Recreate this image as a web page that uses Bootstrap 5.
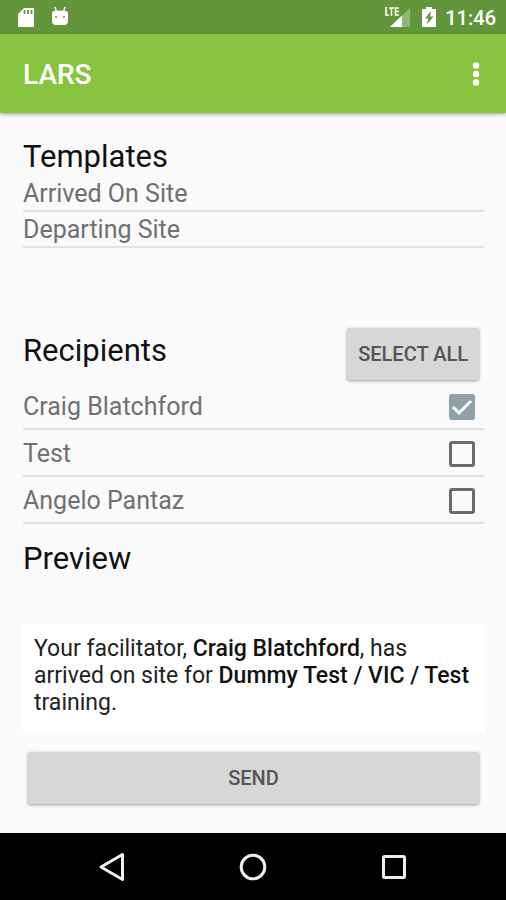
<!DOCTYPE html>
<html lang="en">
<head>
<meta charset="utf-8">
<meta name="viewport" content="width=device-width, initial-scale=1">
<title>LARS</title>
<link href="https://cdn.jsdelivr.net/npm/bootstrap@5.3.0/dist/css/bootstrap.min.css" rel="stylesheet">
<style>
body { font-family: Roboto, "Noto Sans", sans-serif; background: #fafafa; color: #111; }
svg { display: block; }
.status-bar { background: #63963a; height: 34px; padding: 2px 10px 0 17px; color: #fff; }
.clock { font-size: 20px; line-height: 24px; font-weight: 500; }
.app-bar { background: #88c440; height: 79px; padding: 2px 12px 0 23px; box-shadow: 0 1px 4px rgba(0,0,0,.4); }
.app-title { font-size: 28px; line-height: 32px; font-weight: 500; color: #fff; }
.app-menu { width: 36px; height: 44px; }
.content { padding: 25px 22px 28px 23px; }
.section-title { font-size: 31px; line-height: 38px; font-weight: 400; margin: 0; color: #111; }
.item-list .list-group-item { background: transparent; color: #707070; font-size: 25px; line-height: 32px; padding: 2px 0 0; border-width: 0 0 2px; border-color: #e2e2e2; }
.item-list a.list-group-item:hover { color: #444; }
.templates { margin-bottom: 80px; }
.recipients { margin: 3px 0 16px; }
.recipients .list-group-item { min-height: 47px; }
.recipients .form-check-input { width: 26px; height: 26px; margin: 0 9px 0 0; border: 3px solid #6b6b6b; border-radius: 3px; background-color: transparent; }
.recipients .form-check-input:checked { background-color: #90a0aa; border-color: #90a0aa; background-size: 26px 26px; background-position: center; background-origin: border-box;
  background-image: url("data:image/svg+xml,%3Csvg xmlns='http://www.w3.org/2000/svg' viewBox='0 0 26 26'%3E%3Cpath d='M4 13l6 6L22 7' fill='none' stroke='white' stroke-width='3'/%3E%3C/svg%3E"); }
.action { background: #d6d8d7; color: #555; font-size: 20px; line-height: 24px; font-weight: 500; height: 52px; border: 0; border-radius: 3px; box-shadow: 0 1px 3px rgba(0,0,0,.4); }
.select-all { padding: 0 11px; margin-right: 5px; }
.message { background: #fff; margin: 46px 0 20px; padding: 11px 11px 16px; font-size: 23px; line-height: 27px; color: #222; }
.message b { font-weight: 500; color: #111; }
.send-wrap { padding: 0 5px; }
.system-nav { background: #000; height: 67px; padding: 0 42px; }
</style>
</head>
<body>
<div class="d-flex flex-column min-vh-100">
  <div class="status-bar d-flex align-items-center justify-content-between">
    <div class="d-flex align-items-center gap-3">
      <svg width="18" height="22" viewBox="0 0 18 22" role="img" aria-label="Memory card"><path d="M7 1h9a1 1 0 0 1 1 1v17a1 1 0 0 1-1 1H2a1 1 0 0 1-1-1V7z" fill="#fff"/><path d="M7.500 3v4M11 3v4M14.500 3v4" stroke="#63963a" stroke-width="1.800"/></svg>
      <svg width="18" height="22" viewBox="0 0 18 22" role="img" aria-label="Android"><path d="M4 0l1.500 5M14 0l-1.500 5" stroke="#fff" stroke-width="1.500"/><path d="M1 6q0-2 2-2 6-1 12 0 2 0 2 2v8q0 4-4 4H5q-4 0-4-4z" fill="#fff"/><circle cx="5" cy="10" r="1" fill="#63963a"/><circle cx="13" cy="10" r="1" fill="#63963a"/></svg>
    </div>
    <div class="d-flex align-items-center">
      <svg width="27" height="24" viewBox="0 0 27 24" role="img" aria-label="LTE signal"><path d="M6 21L26 2v19z" fill="#fff" opacity=".3"/><path d="M6 21L18 9.600V21z" fill="#fff"/><path d="M0 0h16v11H0z" fill="#63963a"/><path d="M2 1v8h3M5 2h5M7.500 2v8M15 2h-3.500v7H15M11.500 5.500H15" fill="none" stroke="#fff" stroke-width="1.600"/></svg>
      <svg class="ms-2 me-1" width="22" height="24" viewBox="0 0 22 24" role="img" aria-label="Battery charging"><path d="M7 1h6v2h3a1 1 0 0 1 1 1v16a1 1 0 0 1-1 1H4a1 1 0 0 1-1-1V4a1 1 0 0 1 1-1h3z" fill="#fff"/><path d="M12 5l-6 7.500h3.500L8 18.500l6.500-8H11z" fill="#63963a"/></svg>
      <span class="clock">11:46</span>
    </div>
  </div>
  <header class="app-bar d-flex align-items-center justify-content-between">
    <h1 class="app-title mb-0">LARS</h1>
    <button class="app-menu btn p-0 border-0 d-flex align-items-center justify-content-center" type="button" aria-label="More options">
      <svg width="8" height="26" viewBox="0 0 8 26" fill="#fff"><circle cx="4" cy="3.500" r="3.200"/><circle cx="4" cy="12" r="3.200"/><circle cx="4" cy="20.500" r="3.200"/></svg>
    </button>
  </header>
  <main class="content flex-grow-1">
    <h2 class="section-title">Templates</h2>
    <div class="templates item-list list-group rounded-0">
      <a href="#" class="list-group-item">Arrived On Site</a>
      <a href="#" class="list-group-item">Departing Site</a>
    </div>
    <div class="d-flex justify-content-between align-items-start">
      <h2 class="section-title pt-1">Recipients</h2>
      <button type="button" class="action select-all btn">SELECT ALL</button>
    </div>
    <ul class="recipients item-list list-group rounded-0">
      <li class="list-group-item d-flex align-items-center justify-content-between"><label class="flex-grow-1" for="r1">Craig Blatchford</label><input class="form-check-input" type="checkbox" id="r1" checked></li>
      <li class="list-group-item d-flex align-items-center justify-content-between"><label class="flex-grow-1" for="r2">Test</label><input class="form-check-input" type="checkbox" id="r2"></li>
      <li class="list-group-item d-flex align-items-center justify-content-between"><label class="flex-grow-1" for="r3">Angelo Pantaz</label><input class="form-check-input" type="checkbox" id="r3"></li>
    </ul>
    <h2 class="section-title">Preview</h2>
    <p class="message">Your facilitator, <b>Craig Blatchford</b>, has arrived on site for <b>Dummy Test / VIC / Test</b> training.</p>
    <div class="send-wrap"><button type="button" class="action btn w-100">SEND</button></div>
  </main>
  <nav class="system-nav d-flex align-items-center" aria-label="System">
    <button class="btn border-0 p-0 flex-fill d-flex justify-content-center" type="button" aria-label="Back"><svg width="28" height="30" viewBox="0 0 28 30"><path d="M3 15L24.500 2.500v25z" fill="none" stroke="#eee" stroke-width="3" stroke-linejoin="round"/></svg></button>
    <button class="btn border-0 p-0 flex-fill d-flex justify-content-center" type="button" aria-label="Home"><svg width="28" height="28" viewBox="0 0 28 28"><circle cx="14" cy="14" r="11.800" fill="none" stroke="#eee" stroke-width="3"/></svg></button>
    <button class="btn border-0 p-0 flex-fill d-flex justify-content-center" type="button" aria-label="Recent apps"><svg width="28" height="28" viewBox="0 0 28 28"><rect x="3.500" y="3.500" width="21" height="21" rx="1" fill="none" stroke="#eee" stroke-width="3"/></svg></button>
  </nav>
</div>
<script src="https://cdn.jsdelivr.net/npm/bootstrap@5.3.0/dist/js/bootstrap.bundle.min.js"></script>
</body>
</html>
